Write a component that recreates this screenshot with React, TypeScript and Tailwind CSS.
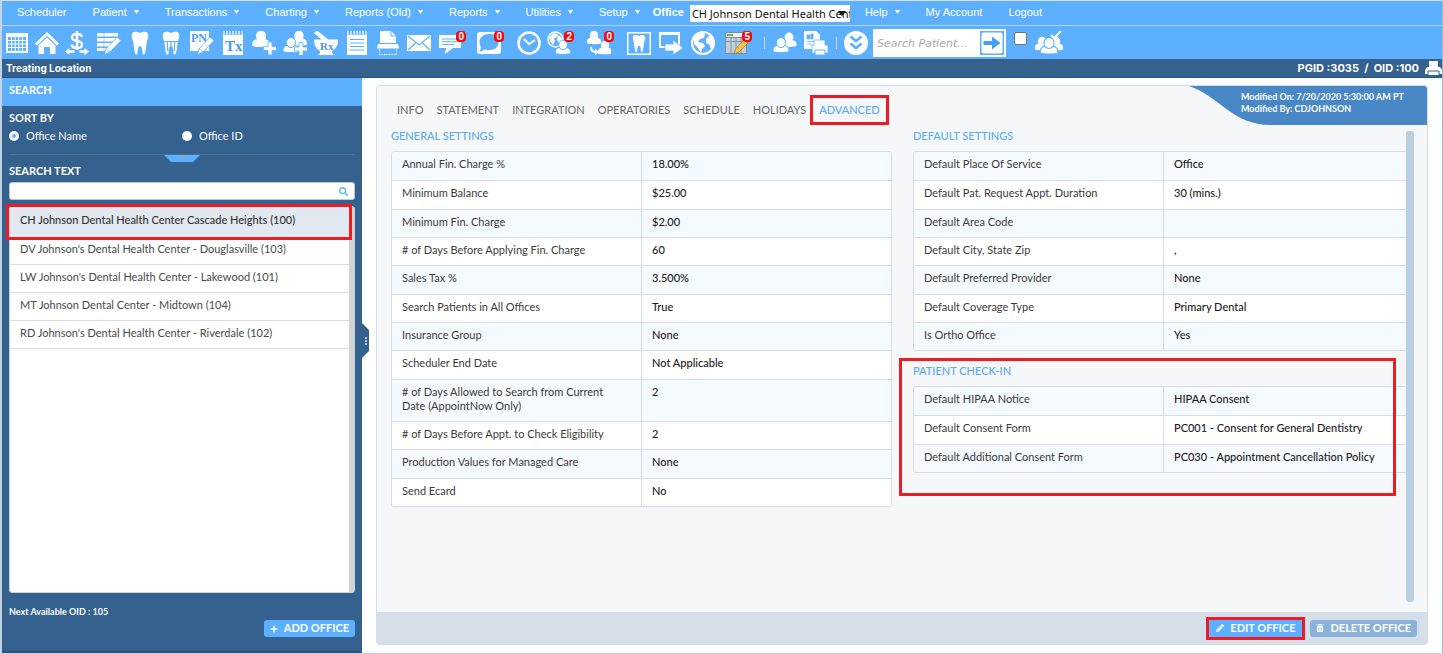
import type { ReactNode } from "react"
import { FaPlus, FaPencilAlt, FaTrashAlt, FaSearch } from "react-icons/fa"

const menuLeft = [
  { label: "Scheduler", arrow: false },
  { label: "Patient", arrow: true },
  { label: "Transactions", arrow: true },
  { label: "Charting", arrow: true },
  { label: "Reports (Old)", arrow: true },
  { label: "Reports", arrow: true },
  { label: "Utilities", arrow: true },
  { label: "Setup", arrow: true },
]

const menuRight = [
  { label: "Help", arrow: true },
  { label: "My Account", arrow: false },
  { label: "Logout", arrow: false },
]

const offices = [
  "DV Johnson's Dental Health Center - Douglasville (103)",
  "LW Johnson's Dental Health Center - Lakewood (101)",
  "MT Johnson Dental Center - Midtown (104)",
  "RD Johnson's Dental Health Center - Riverdale (102)",
]

const tabs = ["INFO", "STATEMENT", "INTEGRATION", "OPERATORIES", "SCHEDULE", "HOLIDAYS"]

const generalSettings = [
  ["Annual Fin. Charge %", "18.00%"],
  ["Minimum Balance", "$25.00"],
  ["Minimum Fin. Charge", "$2.00"],
  ["# of Days Before Applying Fin. Charge", "60"],
  ["Sales Tax %", "3.500%"],
  ["Search Patients in All Offices", "True"],
  ["Insurance Group", "None"],
  ["Scheduler End Date", "Not Applicable"],
  ["# of Days Allowed to Search from Current Date (AppointNow Only)", "2"],
  ["# of Days Before Appt. to Check Eligibility", "2"],
  ["Production Values for Managed Care", "None"],
  ["Send Ecard", "No"],
]

const defaultSettings = [
  ["Default Place Of Service", "Office"],
  ["Default Pat. Request Appt. Duration", "30 (mins.)"],
  ["Default Area Code", ""],
  ["Default City, State Zip", ","],
  ["Default Preferred Provider", "None"],
  ["Default Coverage Type", "Primary Dental"],
  ["Is Ortho Office", "Yes"],
]

const patientCheckIn = [
  ["Default HIPAA Notice", "HIPAA Consent"],
  ["Default Consent Form", "PC001 - Consent for General Dentistry"],
  ["Default Additional Consent Form", "PC030 - Appointment Cancellation Policy"],
]

function Tool({ label, badge, children }: { label: string; badge?: string; children: ReactNode }) {
  return (
    <button type="button" aria-label={label} className="relative w-6 h-6 shrink-0 text-white">
      <svg viewBox="0 0 24 24" className="w-6 h-6" fill="currentColor">
        {children}
      </svg>
      {badge && (
        <span className="absolute top-0 -right-[3px] h-[11px] px-0.5 rounded-[4px] bg-[#f50a0a] text-[10px] leading-[11px] font-bold">
          {badge}
        </span>
      )}
    </button>
  )
}

const TOOTH =
  "M4 3C5-.2 9 .6 12 2c3-1.400 7-2.200 8 1 1 3-1 6-1.500 9-.4 4-.6 8-2 11-1 1.500-2 .5-2-1 0-3-.4-7-2.500-7s-2.500 4-2.500 7c0 1.500-1 2.500-2 1-1.400-3-1.600-7-2-11C5 9 3 6 4 3z"

/* head and shoulders, drawn round x=0 with the feet at y=14 */
function Person({ x, y, s = 1, outline }: { x: number; y: number; s?: number; outline?: boolean }) {
  return (
    <g
      transform={`translate(${x} ${y}) scale(${s})`}
      stroke={outline ? "#5cb0ff" : "none"}
      strokeWidth={outline ? 1 : 0}
    >
      <path d="M-8 13.500c0-4.500 1.500-5.500 5-6.200h6c3.500.7 5 1.700 5 6.200-1.500 1.500-14.500 1.500-16 0z" />
      <ellipse cx="0" cy="4.600" rx="4.600" ry="5" />
    </g>
  )
}

function Pencil() {
  return (
    <g stroke="#5cb0ff" strokeWidth="0.8">
      <path d="M20 6l4 3.500L13 21l-5.500 2.500L9 18z" />
      <path d="M9.500 18l3.500 3" />
    </g>
  )
}

function NoteTabs() {
  return <path d="M3 0v4M6 0v4M9 0v4M12 0v4M15 0v4M18 0v4M21 0v4" stroke="currentColor" strokeWidth="1.200" />
}

function Toolbar() {
  return (
    <div className="flex items-center min-h-[33px] pl-[3px] bg-[#5cb0ff]">
      <div className="flex gap-1.5">
        <Tool label="Schedule">
          <path fillRule="evenodd" d="M1 2h22v20H1zM3 6v14h18V6z" />
          <path d="M3 9.500h18M3 13h18M3 16.500h18M6.600 6v14M10.200 6v14M13.800 6v14M17.400 6v14" stroke="currentColor" />
        </Tool>
        <Tool label="Home">
          <path d="M12 1l12 11.500-2 2L12 5 2 14.500l-2-2z" />
          <path d="M12 6.500l8.500 8V23H15v-7H9v7H3.500v-8.500z" />
        </Tool>
        <Tool label="Transactions">
          <path
            d="M17 6c-.5-2-2-3-5-3-3.200 0-5 1.200-5 3.500C7 11.500 17 8.500 17 13.500c0 2.400-2 3.500-5 3.500-3.200 0-5-1.200-5.300-3.500M12 0v19"
            fill="none"
            stroke="currentColor"
            strokeWidth="2.400"
          />
          <path d="M0 20.500l4.500-3.500v2.300h5v2.400h-5V24zM24 20.500L19.500 17v2.300h-5v2.400h5V24z" />
        </Tool>
      </div>

      <div className="flex gap-[7px] ml-2">
        <Tool label="Edit ledger">
          <path d="M0 2h21v3.500H0zM0 7h21v3.500H0zM0 12h15v3.500H0zM0 17h9v3H0z" />
          <path d="M7 2v18" stroke="#5cb0ff" strokeWidth="0.6" />
          <Pencil />
        </Tool>
        <Tool label="Tooth chart">
          <path d={TOOTH} />
        </Tool>
        <Tool label="Perio chart">
          <path d={TOOTH} />
          <path d="M4 10.500h16M8.500 11v9M12 11v5M15.500 11v9" stroke="#5cb0ff" strokeWidth="1.200" />
        </Tool>
        <Tool label="Progress notes">
          <path d="M0 0h19v20H0z" />
          <text x="1" y="11" fontSize="12" fontWeight="bold" fontFamily="Liberation Serif, serif" fill="#4a9aea">
            PN
          </text>
          <Pencil />
        </Tool>
        <Tool label="Treatment plan">
          <NoteTabs />
          <path d="M2 4h20v20H2z" />
          <text x="4" y="20" fontSize="15" fontWeight="bold" fontFamily="Liberation Serif, serif" fill="#4a9aea">
            Tx
          </text>
        </Tool>
        <Tool label="Add patient">
          <Person x={9} y={0} s={1.1} />
          <path d="M16 11h4v4.500h4.500v4H20V24h-4v-4.500h-4.500v-4H16z" stroke="#5cb0ff" strokeWidth="0.8" />
        </Tool>
        <Tool label="Add family">
          <Person x={16} y={0} />
          <Person x={8} y={7} outline />
          <path d="M16 11.500h4V16h4.500v4H20v4.500h-4V20h-4.500v-4H16z" stroke="#5cb0ff" strokeWidth="0.8" />
        </Tool>
        <Tool label="Prescriptions">
          <path d="M0 2c1-2 4-2 5-1l10 8H8zM0 8.500h24c0 6-2 9-6 11.500v2l2 2H4l2-2v-2C2 17.500 0 14 0 8.500z" />
          <text x="6" y="19" fontSize="11" fontWeight="bold" fontFamily="Liberation Serif, serif" fill="#4a9aea">
            Rx
          </text>
        </Tool>
        <Tool label="Notes">
          <NoteTabs />
          <path d="M2 4h20v20H2z" />
          <path d="M5 8.500h14M5 12h14M5 15.500h14M5 19h14" stroke="#5cb0ff" strokeWidth="1.200" />
        </Tool>
        <Tool label="Scan document">
          <path d="M4 0h11l5 5v7H4z" />
          <path d="M15 0v5h5" fill="none" stroke="#5cb0ff" />
          <path d="M2 13h20l1 4.500H1z" />
          <path d="M3.500 18v5.500h17V18" fill="none" stroke="currentColor" strokeDasharray="1.500 1" />
        </Tool>
        <Tool label="Mail">
          <path d="M0 4h24v16H0z" />
          <path d="M1 5l11 9 11-9M1 19l8-7.500M23 19l-8-7.500" fill="none" stroke="#5cb0ff" strokeWidth="1.200" />
        </Tool>
      </div>

      <div className="flex gap-3.5 ml-2">
        <Tool label="Messages" badge="0">
          <path d="M0 4h22v13h-8l-8 6 1-6H0z" />
          <path d="M3 8h16M3 10.700h16M3 13.400h12" stroke="#5cb0ff" />
        </Tool>
        <Tool label="Chat" badge="0">
          <path d="M3 1h18a3 3 0 013 3v16a3 3 0 01-3 3H3a3 3 0 01-3-3V4a3 3 0 013-3z" />
          <path
            d="M12.500 3c6 0 9 3.500 9 8s-3 8-9 8c-1.500 0-3.500 0-4.500-.5L2.500 21l1.700-4.500C3 14.500 2.500 13 2.500 11c0-4.500 4-8 10-8z"
            fill="#5cb0ff"
          />
        </Tool>
      </div>

      <div className="flex gap-1.5 ml-4">
        <Tool label="Time clock">
          <circle cx="12" cy="12" r="10.500" fill="none" stroke="currentColor" strokeWidth="2.500" />
          <path d="M7 8l5 5 6-4" fill="none" stroke="currentColor" strokeWidth="2" />
        </Tool>
        <Tool label="Online patients" badge="2">
          <circle cx="8.500" cy="8.500" r="7.500" fill="none" stroke="currentColor" strokeWidth="1.500" />
          <path d="M2 6l5-4 4 1-1 3-3 1 1 3-2 4-3-4zM11 4l4 3v6l-4-2-1-3z" />
          <Person x={16} y={9.500} s={0.95} outline />
        </Tool>
      </div>

      <div className="flex ml-4">
        <Tool label="Referrals" badge="0">
          <Person x={7} y={0} s={0.9} />
          <Person x={18} y={10} s={0.9} />
          <path d="M4 16c0 4 2 5 5 5" fill="none" stroke="currentColor" strokeWidth="2" />
          <path d="M8 17.500l4 3.500-4 3z" />
        </Tool>
      </div>

      <div className="flex gap-2 ml-4">
        <Tool label="Imaging">
          <path fillRule="evenodd" d="M0 1h24v23H0zM1.500 2.500v20h21v-20z" />
          <path d={TOOTH} transform="translate(3 3.500) scale(.75)" />
        </Tool>
        <Tool label="Export">
          <path fillRule="evenodd" d="M0 1h21v16H0zM2 4v11h17V4z" />
          <path d="M6 13h8V9l10 8-10 7v-4H6z" stroke="#5cb0ff" strokeWidth="0.8" />
        </Tool>
        <Tool label="Web">
          <circle cx="12" cy="12" r="11" fill="none" stroke="currentColor" strokeWidth="2" />
          <path d="M3 6l7-5 4 2-1 4-4 1-2 3 5 1 2 3-3 3-1 4-3-5-4-4zM15 8l4-4 3 4 1 5-3 5-2-5-3-1z" />
        </Tool>
      </div>

      <div className="flex ml-2.5">
        <Tool label="Task list" badge="5">
          <path d="M0 1h22v22H0z" fill="#7c8b9c" />
          <path d="M1 2h20v4H1z" fill="#eef3f7" />
          <path d="M2 3h6v2H2z" fill="#67b84c" />
          <path d="M1 7h20v15H1z" fill="#c3cfda" />
          <path d="M6 7v15M11 7v15M16 7v15M1 10.500h20" stroke="#8294a6" />
          <path d="M19 9l4 3-9 9-5 2 1.500-5z" fill="#f6c443" stroke="#9a7a26" strokeWidth="0.7" />
        </Tool>
      </div>

      <span className="ml-[15px] w-px h-3 bg-slate-300" />
      <div className="flex gap-[7px] ml-2">
        <Tool label="Patients">
          <Person x={16} y={2} s={0.95} />
          <Person x={8} y={7} outline />
        </Tool>
        <Tool label="Print report">
          <path d="M0 0h12l4 4v14H0z" />
          <path d="M3 4h3v4H3zM7 3h2v5H7zM3 10.500h8M3 13h5" fill="#5cb0ff" stroke="#5cb0ff" strokeWidth="0.8" />
          <path d="M10 9h11v5h3v8H8v-8h2z" stroke="#5cb0ff" strokeWidth="0.8" />
          <path d="M11 19h10v5H11z" stroke="#5cb0ff" />
        </Tool>
      </div>
      <span className="ml-2 w-px h-3 bg-slate-300" />

      <div className="flex ml-[7px]">
        <Tool label="More tools">
          <circle cx="12" cy="12" r="12" />
          <path
            d="M6.500 5.500l5.500 4.500 5.500-4.500M6.500 12.500L12 17l5.500-4.500"
            fill="none"
            stroke="#5cb0ff"
            strokeWidth="2.800"
          />
        </Tool>
      </div>

      <div className="flex ml-[5px] h-7 bg-white">
        <input
          type="text"
          aria-label="Search patient"
          placeholder="Search Patient..."
          className="w-[107px] pt-1 pl-1 text-[11px] italic placeholder:text-[#aaaaaa] outline-none"
          style={{ fontFamily: "'DejaVu Sans', sans-serif" }}
        />
        <button type="button" aria-label="Search" className="my-0.5 mr-0.5">
          <svg viewBox="0 0 24 24" className="w-6 h-6">
            <path d="M0 0h24v24H0z" fill="#5cb0ff" />
            <rect x="1.500" y="1.500" width="21" height="21" rx="2" fill="#fff" />
            <path d="M3.500 10H12V5.500l8.500 6.500-8.500 6.500V14H3.500z" fill="#4a9ff0" />
          </svg>
        </button>
      </div>

      <input
        type="checkbox"
        aria-label="Include inactive"
        className="ml-2 mb-2 w-[13px] h-[13px] appearance-none bg-white border border-[#767676] rounded-[2px]"
      />
      <button type="button" aria-label="Patient group" className="ml-[7px] text-white">
        <svg viewBox="0 0 30 24" className="w-[30px] h-6" fill="currentColor">
          <Person x={8} y={6} s={0.9} />
          <Person x={22} y={6} s={0.9} />
          <Person x={15} y={7} s={1.1} outline />
          <path d="M17 4l3 3 7-7" fill="none" stroke="currentColor" strokeWidth="2" />
        </svg>
      </button>
    </div>
  )
}

function MenuItem({ label, arrow }: { label: string; arrow: boolean }) {
  return (
    <a href="#" className="flex items-center gap-[7px] whitespace-nowrap">
      {label}
      {arrow && (
        <svg viewBox="0 0 5 4" className="w-[5px] h-1" fill="currentColor">
          <path d="M0 0h5L2.500 4z" />
        </svg>
      )}
    </a>
  )
}

function MenuBar() {
  return (
    <nav className="flex items-center min-h-[25px] pb-0.5 pl-[15px] bg-[#5cb0ff] border-b border-[#b4d3ee] text-white text-[11px]">
      <div className="flex gap-[26px]">
        {menuLeft.map((m) => (
          <MenuItem key={m.label} {...m} />
        ))}
      </div>
      <label htmlFor="office" className="ml-[13px] font-bold">
        Office
      </label>
      <div className="relative ml-1.5 -mb-0.5">
        <select
          id="office"
          className="block w-40 h-[17px] pl-0.5 appearance-none bg-white text-[#111111] text-[11px] leading-[15px] overflow-hidden"
          style={{ fontFamily: "'Noto Sans', sans-serif" }}
        >
          <option>CH Johnson Dental Health Center Cascade Heights</option>
        </select>
        <svg viewBox="0 0 8 5" className="absolute right-1 top-1.5 w-2 h-[5px]">
          <path d="M0 0h8L4 5z" fill="#111" />
        </svg>
      </div>
      <div className="flex gap-[26px] ml-[15px]">
        {menuRight.map((m) => (
          <MenuItem key={m.label} {...m} />
        ))}
      </div>
    </nav>
  )
}

function Sidebar() {
  return (
    <aside className="relative flex flex-col w-[360px] shrink-0 bg-[#34618d] text-white text-[11px] border-b-2 border-[#285482]">
      <h2 className="h-7 pl-[7px] leading-6 bg-[#5cb0ff] font-bold">SEARCH</h2>

      <div className="flex flex-col grow pl-[7px] pr-[7px]">
        <fieldset className="pt-1">
          <legend className="leading-4 pt-1 font-bold">SORT BY</legend>
          <div className="flex items-center -mt-0.5 leading-4">
            <label className="flex items-center gap-[7px] w-[173px]">
              <input
                type="radio"
                name="sort"
                defaultChecked
                className="appearance-none w-2.5 h-2.5 rounded-full bg-white border-white checked:bg-[#5cb0ff] checked:border-[3px]"
              />
              Office Name
            </label>
            <label className="flex items-center gap-[7px]">
              <input
                type="radio"
                name="sort"
                className="appearance-none w-2.5 h-2.5 rounded-full bg-white border-white checked:bg-[#5cb0ff] checked:border-[3px]"
              />
              Office ID
            </label>
          </div>
        </fieldset>

        <div className="flex justify-center mt-2.5 h-[9px] border-t border-[#55718f]">
          <svg viewBox="0 0 36 7" className="w-9 h-[7px]">
            <path d="M0 0h36l-7 7H7z" fill="#5cb0ff" />
            <path d="M14 1.500h2.500v2H14zM17.500 1.500H20v2h-2.500zM21 1.500h2.500v2H21z" fill="#87a5c4" />
          </svg>
        </div>

        <label htmlFor="office-search" className="leading-4 font-bold">
          SEARCH TEXT
        </label>
        <div className="flex items-center mt-[3px] h-[18px] pr-1.5 bg-white border border-[#b9c8d8] rounded-[3px]">
          <input id="office-search" type="text" className="grow min-w-0 px-2 text-gray-800 outline-none" />
          <FaSearch className="w-[9px] h-[9px] text-[#5cb0ff]" />
        </div>

        <div className="flex grow mt-1.5 bg-white border border-[#c9d4df] rounded-[3px] text-[#4a4a4a]">
          <ul className="grow">
            <li className="relative h-[30px] pl-2.5 leading-[26px] bg-[#e2e8f0] text-[#333333] font-medium">
              CH Johnson Dental Health Center Cascade Heights (100)
              <span className="absolute -top-[3px] -bottom-[3px] -left-1 -right-[3px] border-[3px] border-[#ed1c24]" />
            </li>
            {offices.map((o) => (
              <li key={o} className="h-7 pl-2.5 leading-6 border-b border-[#dedede]">
                {o}
              </li>
            ))}
          </ul>
          <div className="w-[5px] bg-[#d3d3d3]" />
        </div>

        <p className="mt-[11px] leading-4 text-[9px] font-bold">Next Available OID : 105</p>
        <button
          type="button"
          className="flex items-center self-end gap-1.5 h-[17px] mb-3.5 px-1.5 rounded-[3px] bg-[#5cb0ff] font-bold"
        >
          <FaPlus className="w-2 h-2" />
          ADD OFFICE
        </button>
      </div>

      <svg viewBox="0 0 7 35" className="absolute left-full top-[245px] w-[7px] h-[35px]">
        <path d="M0 0l7 7v21l-7 7z" fill="#34618d" />
        <path d="M3 14h2v2H3zM3 17h2v2H3zM3 20h2v2H3z" fill="#b9cbdc" />
      </svg>
    </aside>
  )
}

function SettingsTable({ rows }: { rows: string[][] }) {
  return (
    <div className="border border-[#d5dde8] rounded-[3px] overflow-hidden">
      <table className="w-full table-fixed border-collapse text-[11px] leading-[14px]">
        <tbody>
          {rows.map(([name, value]) => (
            <tr
              key={name}
              className="h-7 nth-[3n+2]:h-[29px] align-top odd:bg-[#f5faff] even:bg-white border-b border-[#d5dde8] last:border-b-0"
            >
              <th
                scope="row"
                className="w-1/2 pl-2.5 pr-4 pt-[5px] pb-2 text-left font-normal text-[#3b3b3b] border-r border-[#d5dde8]"
              >
                {name}
              </th>
              <td className="pl-2.5 pt-[5px] pb-2 font-medium text-[#1c1c1c] whitespace-nowrap">{value}</td>
            </tr>
          ))}
        </tbody>
      </table>
    </div>
  )
}

function SectionTitle({ children }: { children: ReactNode }) {
  return <h3 className="mb-[7px] leading-4 text-[11px] font-medium text-[#5cabf8]">{children}</h3>
}

function Details() {
  return (
    <main className="flex flex-col grow ml-[14px] mr-[14px] mt-[7px] mb-2 border border-[#d5dde8] rounded-[4px] bg-[#f5f7f9] overflow-hidden">
      <div className="relative flex flex-col grow pl-[14px] pr-[13px]">
        <div className="absolute right-0 top-0 w-[238px] pl-[52px] pt-[5px] text-white text-[9px] leading-3 font-bold">
          <svg viewBox="0 0 238 39" className="absolute left-0 top-0 w-[238px] h-[39px]">
            <path d="M0 0c32 11 43 39 82 39h156V0z" fill="#4888c6" />
          </svg>
          <p className="relative">Modified On: 7/20/2020 5:30:00 AM PT</p>
          <p className="relative">Modified By: CDJOHNSON</p>
        </div>

        <div className="flex gap-[13px] pl-1.5 mt-4 mb-2.5 leading-4 text-[11px] text-[#666666]">
          {tabs.map((t) => (
            <button key={t} type="button">
              {t}
            </button>
          ))}
          <button type="button" className="relative font-medium text-[#5cabf8]">
            ADVANCED
            <span className="absolute -inset-x-[9px] -inset-y-[7px] border-[3px] border-[#ed1c24]" />
          </button>
        </div>

        <div className="grid grid-cols-2 gap-x-[21px]">
          <section>
            <SectionTitle>GENERAL SETTINGS</SectionTitle>
            <SettingsTable rows={generalSettings} />
          </section>
          <section>
            <SectionTitle>DEFAULT SETTINGS</SectionTitle>
            <SettingsTable rows={defaultSettings} />
            <div className="relative mt-3">
              <SectionTitle>PATIENT CHECK-IN</SectionTitle>
              <SettingsTable rows={patientCheckIn} />
              <span className="absolute -top-[5px] -bottom-[23px] -left-[14px] right-[18px] border-[3px] border-[#ed1c24]" />
            </div>
          </section>
        </div>

        {/* scroll track over the right edge of the tables */}
        <div className="absolute right-[13px] top-[45px] bottom-2.5 w-2 rounded-[3px] bg-[#b9d0e3]" />
      </div>

      <footer className="flex items-center justify-end gap-[7px] h-8 pr-2.5 bg-[#d5dfe9] text-white text-[11px] font-bold">
        <button type="button" className="relative flex items-center gap-1.5 h-[17px] px-2 rounded-[3px] bg-[#5cb0ff]">
          <FaPencilAlt className="w-2 h-2" />
          EDIT OFFICE
          <span className="absolute -inset-x-0.5 -inset-y-[3px] border-[3px] border-[#ed1c24]" />
        </button>
        <button type="button" className="flex items-center gap-1.5 h-[17px] px-1.5 rounded-[3px] bg-[#8bb3d9]">
          <FaTrashAlt className="w-2 h-2" />
          DELETE OFFICE
        </button>
      </footer>
    </main>
  )
}

export default function App() {
  return (
    <div
      className="flex flex-col min-h-screen bg-white border-l-2 border-r border-t border-b border-l-[#c3d3e6] border-r-[#9db4cf] border-t-[#d9e0e8] border-b-[#c9d2dc]"
      style={{ fontFamily: "'Liberation Sans', Arial, sans-serif" }}
    >
      <MenuBar />
      <Toolbar />
      <div
        className="flex items-center justify-between h-[19px] pl-1 bg-[#34618d] border-b border-[#285482] text-white text-[10px] font-bold"
        style={{ fontFamily: "Inter, sans-serif" }}
      >
        <h1>Treating Location</h1>
        <div className="flex items-center gap-1.5 text-[11px]">
          <span className="whitespace-pre">PGID :3035  /  OID :100</span>
          <button type="button" aria-label="Print">
            <svg viewBox="0 0 17 15" className="w-[17px] h-[15px]" fill="#fff">
              <path d="M4 0h9v6H4zM2 6h13l2 3v4H0V9z" />
              <path d="M3 10h11v4.500H3z" stroke="#34618d" />
            </svg>
          </button>
        </div>
      </div>
      <div className="flex grow" style={{ fontFamily: "Lato, 'Open Sans', sans-serif" }}>
        <Sidebar />
        <Details />
      </div>
    </div>
  )
}
